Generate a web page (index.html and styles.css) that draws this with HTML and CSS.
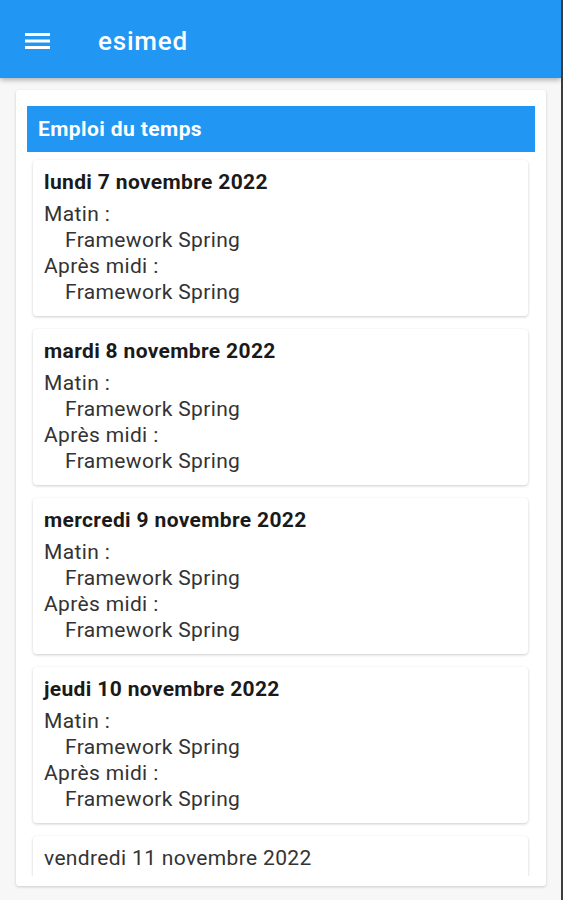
FILE: index.html
```html
<!DOCTYPE html>
<html lang="fr">
<head>
<meta charset="utf-8">
<title>esimed</title>
<link rel="stylesheet" href="styles.css">
</head>
<body>
<header class="appbar">
  <svg class="menu" width="25" height="18" viewBox="0 0 25 18"><rect x="0" y="1" width="25" height="3" fill="#fff"/><rect x="0" y="7.5" width="25" height="3" fill="#fff"/><rect x="0" y="14" width="25" height="3" fill="#fff"/></svg>
  <span class="apptitle">esimed</span>
</header>
<main class="main">
  <section class="panel">
    <div class="panel-title">Emploi du temps</div>
    <div class="list">
      <div class="day">
        <div class="day-head">lundi 7 novembre 2022</div>
        <div class="line">Matin :</div>
        <div class="line indent">Framework Spring</div>
        <div class="line">Après midi :</div>
        <div class="line indent">Framework Spring</div>
      </div>
      <div class="day">
        <div class="day-head">mardi 8 novembre 2022</div>
        <div class="line">Matin :</div>
        <div class="line indent">Framework Spring</div>
        <div class="line">Après midi :</div>
        <div class="line indent">Framework Spring</div>
      </div>
      <div class="day">
        <div class="day-head">mercredi 9 novembre 2022</div>
        <div class="line">Matin :</div>
        <div class="line indent">Framework Spring</div>
        <div class="line">Après midi :</div>
        <div class="line indent">Framework Spring</div>
      </div>
      <div class="day">
        <div class="day-head">jeudi 10 novembre 2022</div>
        <div class="line">Matin :</div>
        <div class="line indent">Framework Spring</div>
        <div class="line">Après midi :</div>
        <div class="line indent">Framework Spring</div>
      </div>
      <div class="day">
        <div class="day-head light">vendredi 11 novembre 2022</div>
        <div class="line">Matin :</div>
      </div>
    </div>
  </section>
</main>
</body>
</html>
```

FILE: styles.css
```css
html, body {
  margin: 0;
  padding: 0;
}
body {
  background: #f7f7f7;
  font-family: Roboto, "Noto Sans", sans-serif;
  color: #222;
  height: 900px;
  overflow: hidden;
  box-sizing: border-box;
  border-right: 2px solid #3c3c3c;
}
.appbar {
  height: 78px;
  box-sizing: border-box;
  padding-top: 3px;
  background: #2196f3;
  display: flex;
  align-items: center;
  padding-left: 25px;
  box-shadow: 0 2px 5px rgba(0,0,0,0.3);
  position: relative;
  z-index: 2;
}
.menu {
  display: block;
}
.apptitle {
  margin-left: 48px;
  color: #fff;
  font-size: 26px;
  font-weight: 500;
  letter-spacing: 0.8px;
}
.main {
  padding: 12px 15px 0 16px;
}
.panel {
  background: #fff;
  height: 796px;
  box-sizing: border-box;
  padding: 16px 11px 10px 11px;
  border-radius: 3px;
  box-shadow: 0 1px 3px rgba(0,0,0,0.18);
  display: flex;
  flex-direction: column;
}
.panel-title {
  height: 46px;
  flex: none;
  background: #2196f3;
  color: #fff;
  font-weight: 700;
  font-size: 21px;
  letter-spacing: 0.4px;
  display: flex;
  align-items: center;
  padding-left: 11px;
}
.list {
  flex: 1;
  overflow: hidden;
  padding: 8px 7px 0 6px;
  display: flex;
  flex-direction: column;
  gap: 13px;
}
.day {
  flex: none;
  background: #fff;
  border-radius: 4px;
  box-shadow: 0 1px 3px rgba(0,0,0,0.2);
  padding: 8px 11px 11px 11px;
}
.day-head {
  font-size: 21px;
  font-weight: 700;
  line-height: 28px;
  margin-bottom: 5px;
  letter-spacing: 0.35px;
  color: #1a1a1a;
}
.day-head.light {
  font-weight: 400;
  color: #333;
}
.line {
  font-size: 21px;
  line-height: 26px;
  letter-spacing: 0.35px;
  color: #333;
}
.indent {
  padding-left: 21px;
}
```
